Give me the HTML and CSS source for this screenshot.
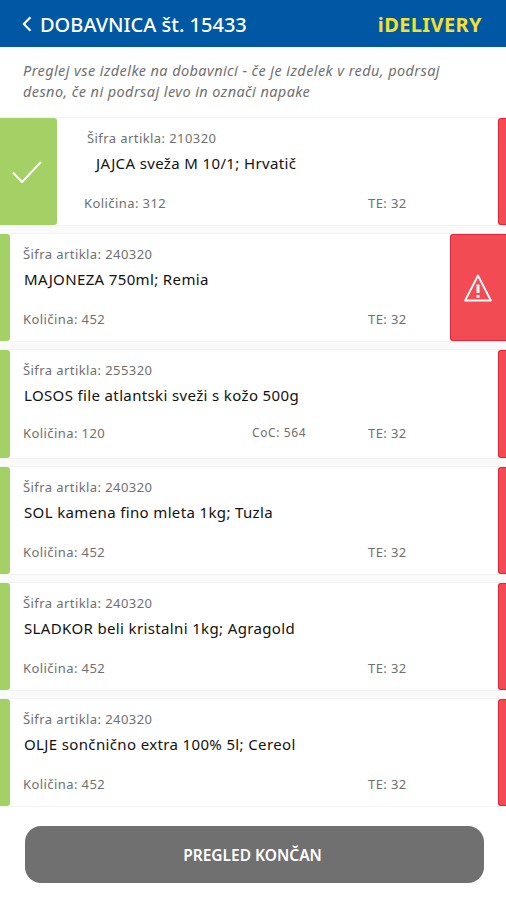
FILE: index.html
```html
<!DOCTYPE html>
<html lang="sl">
<head>
    <meta charset="UTF-8">
    <meta name="viewport" content="width=device-width, initial-scale=1.0">
    <title>iDelivery - Dobavnica</title>
    <link rel="stylesheet" href="styles.css">
</head>
<body>

    <!-- Header -->
    <header class="header">
        <svg class="back" width="10" height="16" viewBox="0 0 10 16">
            <path d="M8.5 1.2 L1.8 8 L8.5 14.8" />
        </svg>
        <h1>DOBAVNICA št. 15433</h1>
        <span class="brand">iDELIVERY</span>
    </header>

    <p class="intro">Preglej vse izdelke na dobavnici - če je izdelek v redu, podrsaj<br>desno, če ni podrsaj levo in označi napake</p>

    <!-- Articles -->
    <main class="list">
        <div class="item item-ok">
            <div class="ok">
                <svg width="30" height="24" viewBox="0 0 30 24">
                    <path d="M1 12.5 L10 22 L29 2" />
                </svg>
            </div>
            <div class="info">
                <div class="code">Šifra artikla: 210320</div>
                <div class="name">JAJCA sveža M 10/1; Hrvatič</div>
                <div class="numbers"><span class="qty">Količina: 312</span><span class="te">TE: 32</span></div>
            </div>
            <div class="error"></div>
        </div>

        <div class="item item-error">
            <div class="ok"></div>
            <div class="info">
                <div class="code">Šifra artikla: 240320</div>
                <div class="name">MAJONEZA 750ml; Remia</div>
                <div class="numbers"><span class="qty">Količina: 452</span><span class="te">TE: 32</span></div>
            </div>
            <div class="error">
                <svg width="28" height="28" viewBox="0 0 28 28">
                    <path d="M14 1.6 L26.8 26.4 H1.2 Z" />
                    <path class="mark" d="M14 10.5 V19 M14 21 V23.8" />
                </svg>
            </div>
        </div>

        <div class="item item-coc">
            <div class="ok"></div>
            <div class="info">
                <div class="code">Šifra artikla: 255320</div>
                <div class="name">LOSOS file atlantski sveži s kožo 500g</div>
                <div class="numbers"><span class="qty">Količina: 120</span><span class="coc">CoC: 564</span><span class="te">TE: 32</span></div>
            </div>
            <div class="error"></div>
        </div>

        <div class="item">
            <div class="ok"></div>
            <div class="info">
                <div class="code">Šifra artikla: 240320</div>
                <div class="name">SOL kamena fino mleta 1kg; Tuzla</div>
                <div class="numbers"><span class="qty">Količina: 452</span><span class="te">TE: 32</span></div>
            </div>
            <div class="error"></div>
        </div>

        <div class="item">
            <div class="ok"></div>
            <div class="info">
                <div class="code">Šifra artikla: 240320</div>
                <div class="name">SLADKOR beli kristalni 1kg; Agragold</div>
                <div class="numbers"><span class="qty">Količina: 452</span><span class="te">TE: 32</span></div>
            </div>
            <div class="error"></div>
        </div>

        <div class="item">
            <div class="ok"></div>
            <div class="info">
                <div class="code">Šifra artikla: 240320</div>
                <div class="name">OLJE sončnično extra 100% 5l; Cereol</div>
                <div class="numbers"><span class="qty">Količina: 452</span><span class="te">TE: 32</span></div>
            </div>
            <div class="error"></div>
        </div>
    </main>

    <button class="finish">PREGLED KONČAN</button>

</body>
</html>
```

FILE: styles.css
```css
* {
    box-sizing: border-box;
}

body {
    margin: 0;
    height: 900px;
    overflow: hidden;
    background-color: #fff;
    font-family: "Noto Sans", "Open Sans", sans-serif;
    display: flex;
    flex-direction: column;
}

svg {
    display: block;
    fill: none;
    stroke: #fff;
    stroke-width: 2;
    stroke-linejoin: round;
}

/* Header */
.header {
    height: 47px;
    flex-shrink: 0;
    padding: 1px 24px 0 22px;
    background-color: #0057a4;
    display: flex;
    align-items: center;
}

.header h1 {
    margin: 0 auto 0 8px;
    color: #fff;
    font-size: 20px;
    font-weight: 500;
}

.back {
    stroke-width: 2.2;
}

.brand {
    color: #f5e02c;
    font-size: 20px;
    font-weight: bold;
    letter-spacing: 0.4px;
}

.intro {
    height: 70px;
    flex-shrink: 0;
    margin: 0;
    padding: 13px 23px 0;
    color: #707070;
    font-size: 14.5px;
    font-style: italic;
    line-height: 21px;
    letter-spacing: 0.41px;
    white-space: nowrap;
}

/* Article list */
.list {
    height: 690px;
    flex-shrink: 0;
    padding-bottom: 1px;
    border-top: 1px solid #f3f3f3;
    background-color: #fafafa;
    display: flex;
    flex-direction: column;
    gap: 9px;
}

.item {
    flex: 1;
    background-color: #fff;
    box-shadow: 0 0 0 1px #f3f3f3;
    display: flex;
}

.ok,
.error {
    width: 10px;
    flex-shrink: 0;
    display: flex;
    align-items: center;
    justify-content: center;
}

.ok {
    background-color: #a4d165;
    border-radius: 0 3px 3px 0;
}

.error {
    width: 8px;
    background-color: #f24b53;
    border: 1px solid #e52535;
    border-right: none;
    border-radius: 3px 0 0 3px;
}

.item-ok .ok {
    width: 57px;
    padding-right: 4px;
}

.item-error .error {
    width: 56px;
    padding-right: 1px;
}

.mark {
    stroke-width: 3;
}

.info {
    flex: 1;
    min-width: 0;
    padding: 10px 0 0 13px;
    color: #707070;
    font-size: 13px;
    letter-spacing: 0.42px;
    white-space: nowrap;
}

.code {
    line-height: 20px;
}

.name {
    margin-top: 2px;
    padding-left: 1px;
    color: #111;
    font-size: 15px;
    line-height: 26px;
    letter-spacing: 0.36px;
}

.numbers {
    margin-top: 17px;
    line-height: 20px;
    display: grid;
    grid-template-columns: 229px 116px auto;
}

.te {
    grid-column: 3;
}

.coc {
    font-size: 12px;
    letter-spacing: 0.6px;
}

.item-coc .numbers {
    margin-top: 15px;
}

/* First article is swiped to the right */
.item-ok .info {
    padding-left: 27px;
}

.item-ok .code {
    padding-left: 3px;
}

.item-ok .name {
    padding-left: 12px;
}

.item-ok .numbers {
    grid-template-columns: 168px 116px auto;
}

/* Button */
.finish {
    height: 57px;
    margin: 19px 22px 0 25px;
    padding-right: 10px;
    border: none;
    border-radius: 16px;
    background-color: #707070;
    color: #fff;
    font-family: inherit;
    font-size: 15.5px;
    font-weight: 600;
}
```
